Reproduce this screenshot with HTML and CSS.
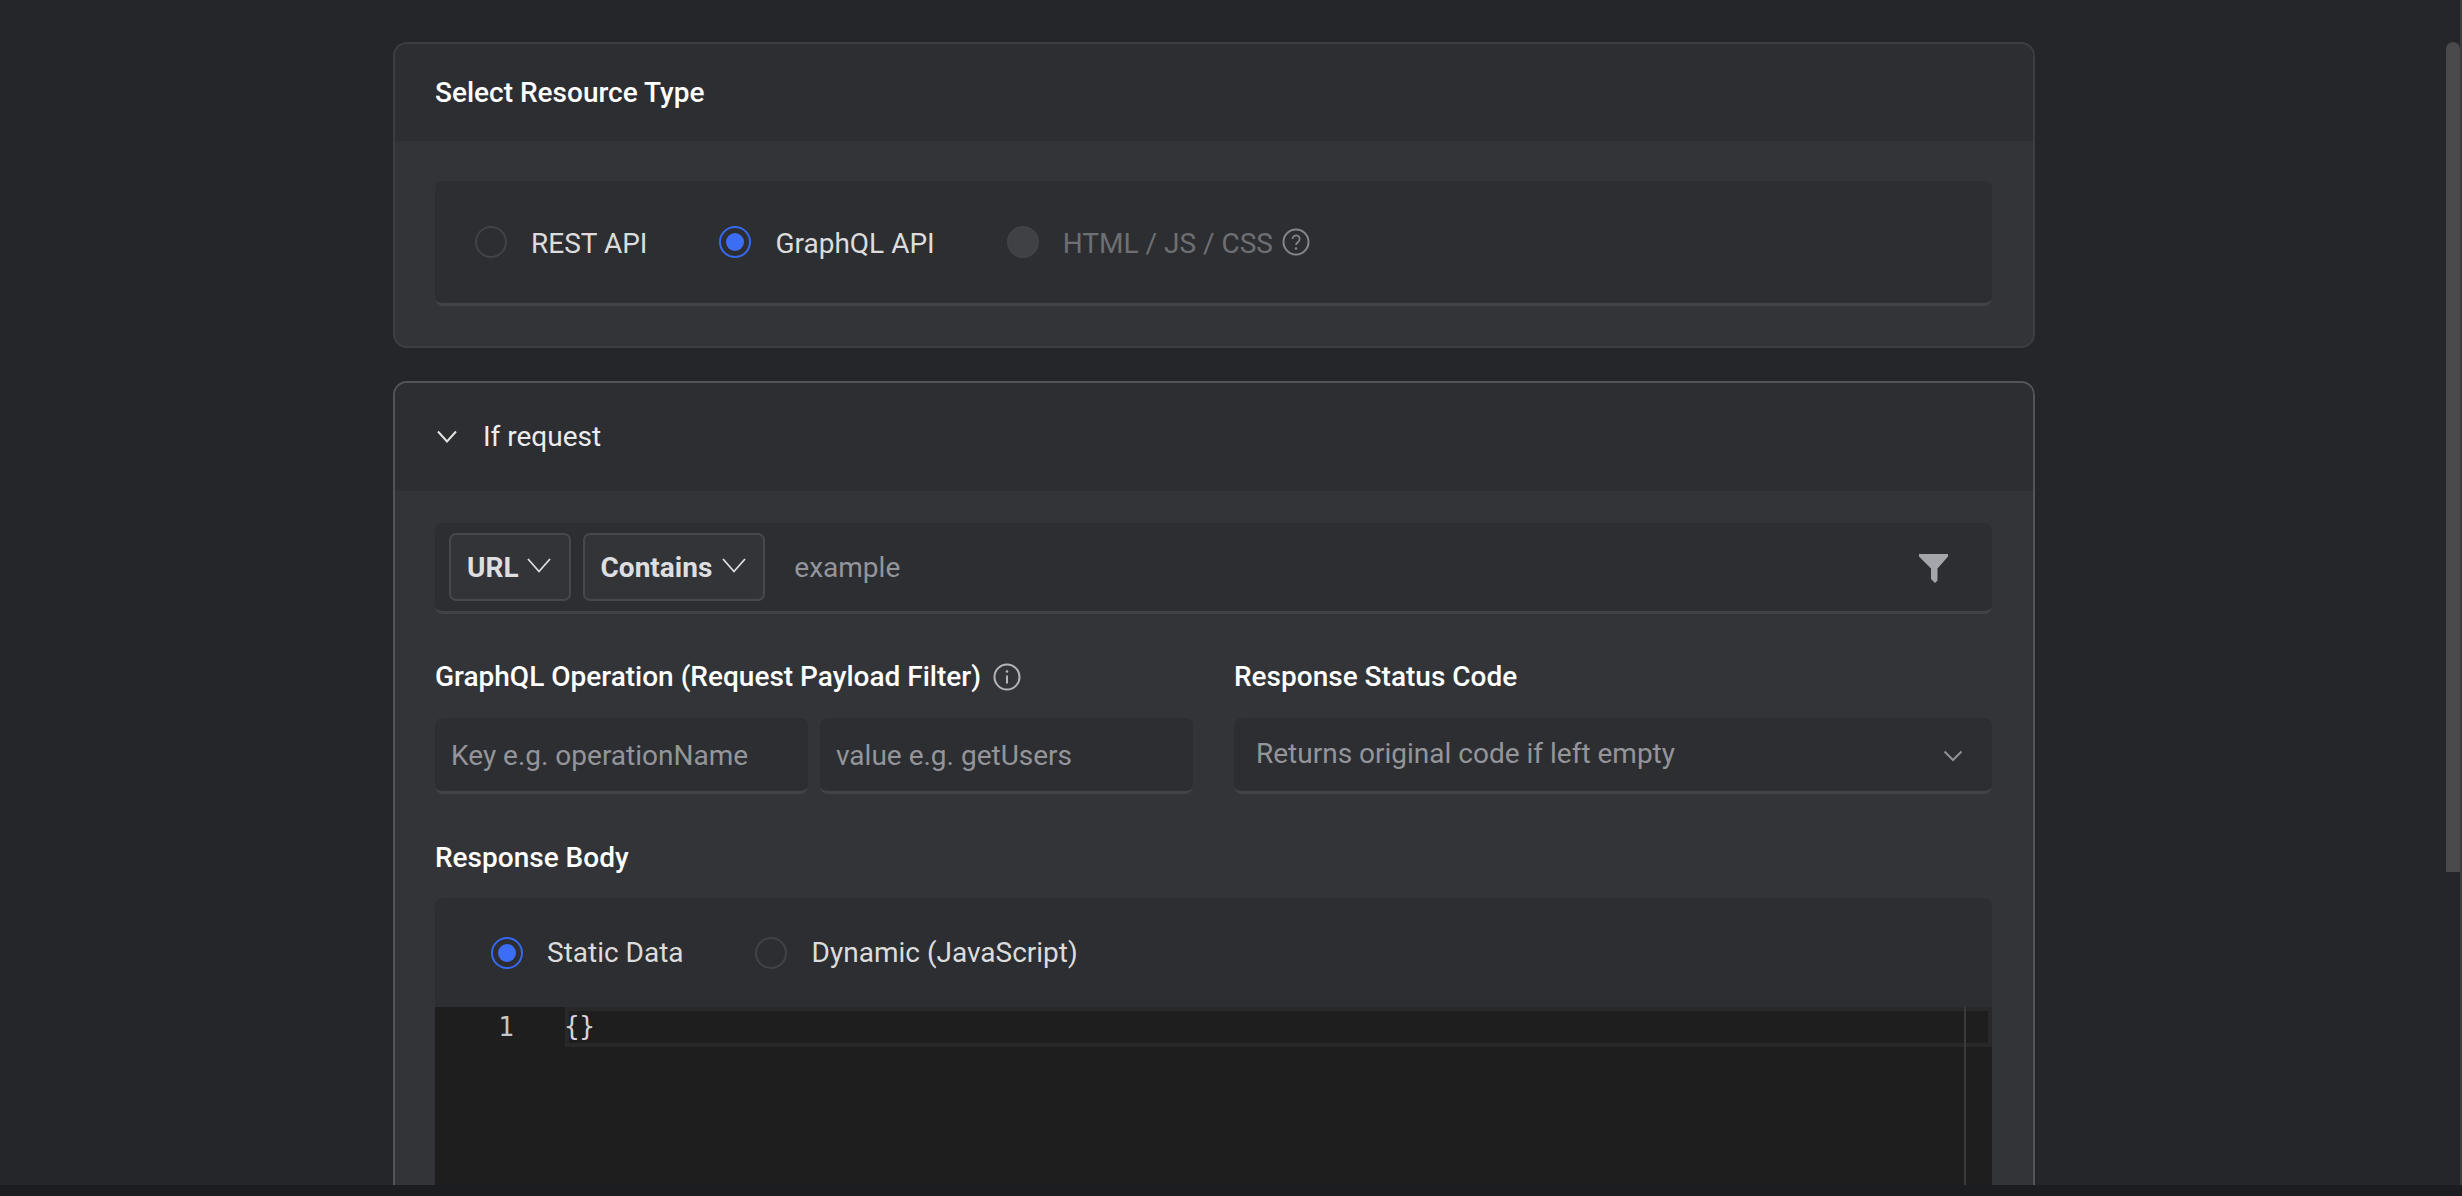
FILE: index.html
```html
<!DOCTYPE html>
<html lang="en">
<head>
<meta charset="utf-8">
<title>Rule editor</title>
<link rel="stylesheet" href="styles.css">
</head>
<body>
<div class="viewport">
  <main class="content">
    <section class="card">
      <header class="card-head"><h2 class="title">Select Resource Type</h2></header>
      <div class="card-body">
        <div class="well radios">
          <label class="radio"><span class="dot"></span><span>REST API</span></label>
          <label class="radio"><span class="dot on"></span><span>GraphQL API</span></label>
          <label class="radio disabled"><span class="dot off"></span><span>HTML / JS / CSS</span>
            <svg class="hint" viewBox="0 0 28 28" fill="none" stroke="currentColor" stroke-width="2"><circle cx="14" cy="14" r="12.500"/><path d="M10.500 11a3.600 3.600 0 1 1 5.600 3c-1.400.9-2.100 1.600-2.100 3" stroke-width="1.700"/><circle cx="14" cy="20.500" r="1.200" fill="currentColor" stroke="none"/></svg>
          </label>
        </div>
      </div>
    </section>

    <section class="card card-open">
      <header class="card-head head-open">
        <svg class="fold" viewBox="0 0 20 13" fill="none" stroke="currentColor" stroke-width="2"><path d="M1 1.500l9 10 9-10"/></svg>
        <h2 class="title plain">If request</h2>
      </header>
      <div class="card-body body-open">
        <div class="well filter">
          <button class="pick pick-short">URL<svg class="pick-arrow" viewBox="0 0 24 15" fill="none" stroke="currentColor" stroke-width="1.800"><path d="M1 1l11 12.500L23 1"/></svg></button>
          <button class="pick">Contains<svg class="pick-arrow" viewBox="0 0 24 15" fill="none" stroke="currentColor" stroke-width="1.800"><path d="M1 1l11 12.500L23 1"/></svg></button>
          <span class="ghost filter-text">example</span>
          <svg class="funnel" viewBox="0 0 29 29" fill="currentColor"><path d="M0 0h29v2.500L18.500 14.500V26.500L16 29l-4-4V14.500L0 2.500z"/></svg>
        </div>

        <div class="columns">
          <div class="col">
            <div class="label">GraphQL Operation (Request Payload Filter)
              <svg class="hint info" viewBox="0 0 28 28" fill="none" stroke="currentColor" stroke-width="2"><circle cx="14" cy="14" r="12.500"/><path d="M14 12.500v8"/><circle cx="14" cy="8.500" r="1.300" fill="currentColor" stroke="none"/></svg>
            </div>
            <div class="pair">
              <div class="well field"><span class="ghost">Key e.g. operationName</span></div>
              <div class="well field"><span class="ghost">value e.g. getUsers</span></div>
            </div>
          </div>
          <div class="col">
            <div class="label">Response Status Code</div>
            <div class="well field select">
              <span class="ghost">Returns original code if left empty</span>
              <svg class="select-arrow" viewBox="0 0 20 12" fill="none" stroke="currentColor" stroke-width="2"><path d="M1.500 1.500l8.500 8.500 8.500-8.500"/></svg>
            </div>
          </div>
        </div>

        <div class="label body-label">Response Body</div>
        <div class="response">
          <div class="radios mode">
            <label class="radio"><span class="dot on"></span><span>Static Data</span></label>
            <label class="radio"><span class="dot"></span><span>Dynamic (JavaScript)</span></label>
          </div>
          <div class="editor">
            <div class="gutter">1</div>
            <div class="lines">
              <div class="current"><code>{}</code></div>
              <div class="ruler"></div>
            </div>
          </div>
        </div>
      </div>
    </section>
  </main>
  <div class="scroll-thumb"></div>
</div>
<div class="strip"></div>
</body>
</html>
```
FILE: styles.css
```css
* { box-sizing: border-box; }
html, body { margin: 0; height: 100%; }
body {
  display: flex;
  flex-direction: column;
  overflow: hidden;
  background: #1c1d21;
  color: #e3e3e4;
  font-family: Roboto, "Noto Sans", sans-serif;
  font-size: 28px;
}
.viewport {
  position: relative;
  flex: 1;
  min-height: 0;
  overflow: hidden;
  background: #25262a;
  border-right: 2px solid #3c3d40;
}
.content { padding: 42px 0 0 393px; width: 2035px; }

.card {
  border: 2px solid #3d3e42;
  border-radius: 14px;
  background: #333438;
  overflow: hidden;
  margin-bottom: 33px;
}
.card-open { border-color: #535458; }
.card-head {
  display: flex;
  align-items: center;
  height: 97px;
  padding: 0 40px;
  background: #2d2e32;
}
.title { margin: 0; font-size: 28px; font-weight: 500; color: #fff; }
.title.plain { font-weight: 400; color: #ececec; }
.head-open { height: 108px; gap: 26px; padding: 0 42px 2px; }
.fold { width: 20px; height: 13px; color: #e3e3e4; flex: none; }
.card-body { padding: 40px 41px 40px 40px; }
.body-open { padding-top: 32px; }

.well {
  background: #2d2e32;
  border-radius: 8px;
  border-bottom: 3px solid #424347;
}
.radios { display: flex; align-items: center; }
.well.radios { height: 125px; padding: 2px 40px 0; gap: 72px; }
.radio { display: flex; align-items: center; gap: 24px; color: #dcdcdd; }
.well.radios .dot { margin-top: -2px; }
.dot {
  display: block;
  flex: none;
  position: relative;
  width: 32px;
  height: 32px;
  border-radius: 50%;
  border: 2px solid #424347;
}
.dot.on { border-color: #3769f0; }
.dot.on::after {
  content: "";
  position: absolute;
  inset: 5px;
  border-radius: 50%;
  background: #3c6ef5;
}
.dot.off { background: #404145; border-color: #424347; }
.radio.disabled { color: #6e6f73; }
.hint { width: 28px; height: 28px; flex: none; margin-left: -15px; margin-top: -2px; color: #85868a; }

.filter {
  display: flex;
  align-items: center;
  height: 91px;
  padding: 0 44px 0 14px;
  gap: 12px;
}
.pick {
  display: flex;
  align-items: center;
  gap: 10px;
  height: 68px;
  padding: 0 17px 0 16px;
  border: 2px solid #47484c;
  border-radius: 7px;
  background: #333438;
  color: #dedee0;
  font: 700 28px Roboto, sans-serif;
}
.pick-short { gap: 8px; padding-right: 18px; }
.pick-arrow { width: 24px; height: 15px; color: #dedee0; margin-top: -3px; }
.ghost { color: #94959a; }
.filter-text { flex: 1; margin-left: 17px; }
.funnel { width: 29px; height: 29px; color: #a5a6ab; flex: none; margin-top: 2px; }

.columns { display: grid; grid-template-columns: 758px 758px; gap: 41px; margin-top: 45px; }
.label { display: flex; align-items: center; gap: 12px; font-weight: 500; color: #fff; line-height: 36px; }
.info { margin: 0; color: #b4b5b8; }
.pair { display: grid; grid-template-columns: 373px 373px; gap: 12px; margin-top: 23px; }
.field { display: flex; align-items: center; height: 76px; padding: 2px 16px 0; }
.col > .field { margin-top: 23px; }
.select { justify-content: space-between; padding: 0 22px 3px; }
.select-arrow { width: 20px; height: 12px; color: #909196; margin-top: 6px; margin-right: 7px; }

.body-label { margin-top: 46px; }
.response {
  margin-top: 22px;
  background: #2d2e32;
  border-radius: 8px 8px 0 0;
  overflow: hidden;
}
.radios.mode { height: 109px; padding: 0 0 0 56px; gap: 71px; }
.mode .radio { gap: 25px; }
.mode .radio:first-child { gap: 24px; }
.editor { display: flex; height: 400px; background: #1e1e1e; font-family: "DejaVu Sans Mono", monospace; font-size: 26px; color: #d4d4d4; }
.gutter { width: 130px; flex: none; text-align: right; padding: 0 51px 0 0; line-height: 40px; color: #c6c6c6; }
.lines { flex: 1; position: relative; }
.current { height: 40px; border: 4px solid #282828; line-height: 30px; background: #1e1e1e; }
.current code { font: inherit; letter-spacing: -0.5px; margin-left: -5px; }
.ruler { position: absolute; top: 0; bottom: 0; right: 26px; width: 2px; background: #3b3b3b; }

.scroll-thumb {
  position: absolute;
  top: 42px;
  right: 0;
  width: 14px;
  height: 830px;
  border-radius: 7px 7px 0 0;
  background: #4a4a4c;
}
.strip { height: 11px; flex: none; background: #1c1d21; }
```
